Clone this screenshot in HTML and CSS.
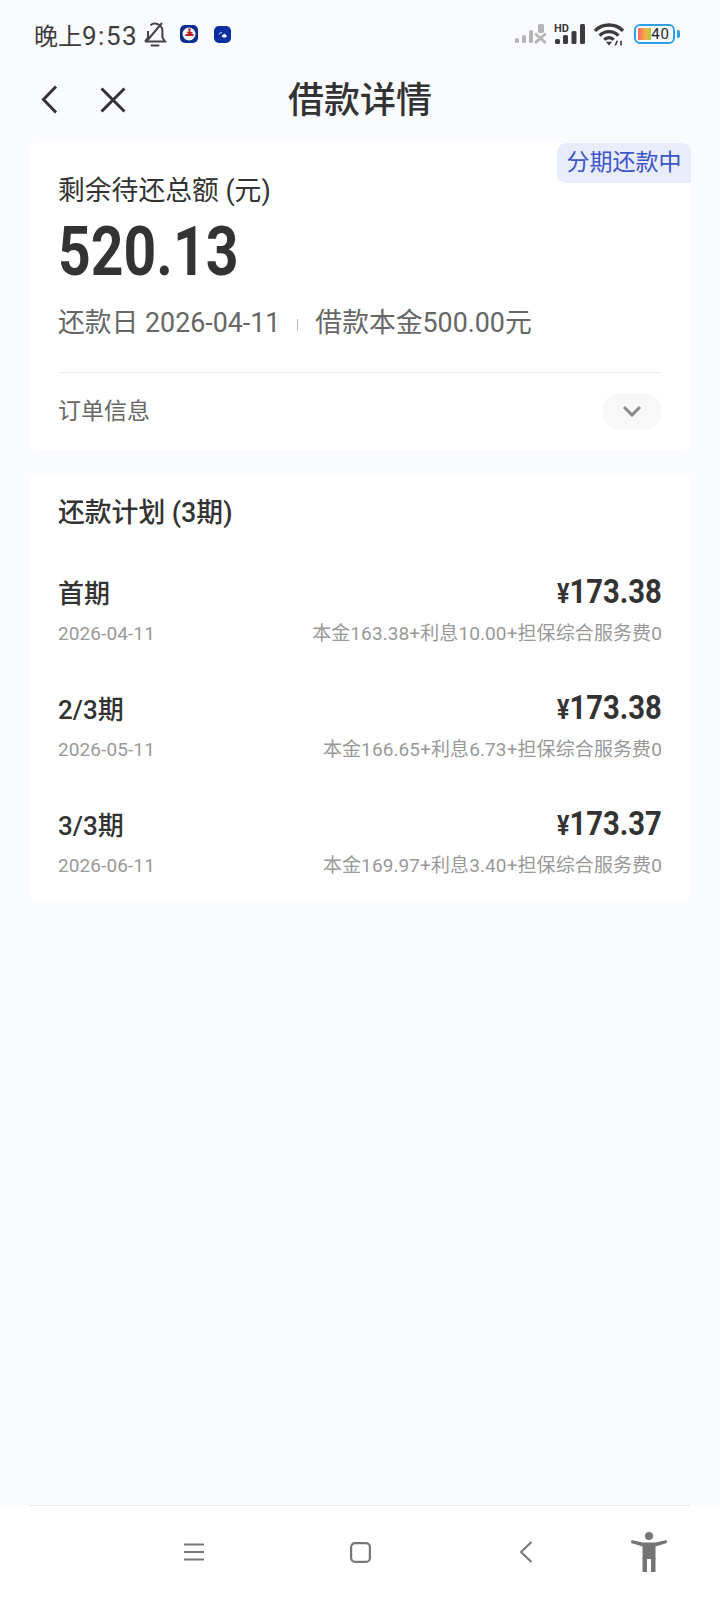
FILE: index.html
```html
<!DOCTYPE html>
<html lang="zh">
<head>
    <meta charset="UTF-8">
    <meta name="viewport" content="width=device-width, initial-scale=1.0">
    <title>借款详情</title>
    <link rel="stylesheet" href="styles.css">
</head>
<body>
    <div class="status-bar">
        <span class="status-time">晚上<span class="status-clock">9:53</span></span>
        <svg class="icon-bell" width="24" height="26" viewBox="0 0 24 26" fill="none" stroke="#444" stroke-width="2">
            <path d="M2 20.5h20l-2.6-4V10a7.4 7.4 0 0 0-12-5.8M5 10v6.500l-3 4"/>
            <path d="M3 21L19 2"/>
            <path d="M8.500 24.500h7" stroke-linecap="round"/>
        </svg>
        <svg class="icon-app-one" width="18" height="18" viewBox="0 0 18 18">
            <rect width="18" height="18" rx="5" fill="#0b2e8f"/>
            <circle cx="9" cy="9" r="6.500" fill="#f4f4f4"/>
            <path d="M8 3.500h3l-1 3 3 1-2 1.500h2.500v2h-8v-2h3l-2-2 2.500-.5z" fill="#c0191f"/>
        </svg>
        <svg class="icon-app-two" width="17" height="17" viewBox="0 0 17 17">
            <rect width="17" height="17" rx="5" fill="#0a2fa0"/>
            <path d="M5 8.500a2 2 0 0 1 3-1.500" fill="none" stroke="#e8eefc" stroke-width="1"/>
            <path d="M7.500 10l3-2.500 2.500 2.500-1 1.500H9z" fill="#f2f5ff"/>
        </svg>
        <div class="status-right">
            <svg width="31" height="20" viewBox="0 0 31 20" fill="#b4b4b4">
                <rect x="0" y="14" width="4" height="5" rx="1.500"/>
                <rect x="7" y="11" width="4" height="8" rx="1.500"/>
                <rect x="14" y="6" width="4" height="13" rx="1.500"/>
                <rect x="23" y="0" width="6" height="9" rx="1.500"/>
                <path d="M20 9.500l11 9.500M31 9.500l-11 9.500" stroke="#b4b4b4" stroke-width="2.800"/>
            </svg>
            <svg width="31" height="22" viewBox="0 0 31 22" fill="#3c3c3c">
                <text x="0" y="8.500" class="hd-text">HD</text>
                <rect x="1" y="16" width="5" height="5" rx="1.500"/>
                <rect x="9" y="12" width="5" height="9" rx="1.500"/>
                <rect x="17.500" y="8" width="5" height="13" rx="1.500"/>
                <rect x="26" y="1" width="5" height="20" rx="1.500"/>
            </svg>
            <svg width="32" height="24" viewBox="0 0 30 23" fill="none" stroke="#3c3c3c" stroke-width="3.200">
                <path d="M1.500 8.500a19 19 0 0 1 27 0"/>
                <path d="M6 13a12.500 12.500 0 0 1 18 0"/>
                <path d="M10.500 17a6 6 0 0 1 9 0"/>
                <path d="M12 19h6l-3 3.500z" fill="#3c3c3c" stroke="none"/>
                <path d="M23 18l-2 4.500M26.500 18v4.500" stroke-width="1.600"/>
            </svg>
            <div class="battery">
                <div class="battery-body">
                    <span class="battery-level"></span>
                    <span class="battery-num">40</span>
                </div>
                <span class="battery-tip"></span>
            </div>
        </div>
    </div>

    <div class="nav-bar">
        <div class="nav-left">
            <svg width="17" height="29" viewBox="0 0 17 29" fill="none" stroke="#333" stroke-width="3">
                <path d="M15 1.500L2.500 14.500 15 27.500"/>
            </svg>
            <svg width="26" height="26" viewBox="0 0 26 26" fill="none" stroke="#333" stroke-width="3">
                <path d="M1.500 1.500l23 23M24.500 1.500l-23 23"/>
            </svg>
        </div>
        <div class="nav-title">借款详情</div>
    </div>

    <div class="content">
        <div class="card summary">
            <div class="tag">分期还款中</div>
            <div class="summary-label">剩余待还总额 (元)</div>
            <div class="summary-amount"><span>520.13</span></div>
            <div class="summary-meta">
                <span>还款日 2026-04-11</span>
                <i class="meta-sep"></i>
                <span>借款本金500.00元</span>
            </div>
            <div class="order-row">
                <span class="order-text">订单信息</span>
                <div class="order-toggle">
                    <svg width="20" height="12" viewBox="0 0 20 12" fill="none" stroke="#888" stroke-width="3">
                        <path d="M2 2l8 8 8-8"/>
                    </svg>
                </div>
            </div>
        </div>

        <div class="card plan">
            <div class="plan-title">还款计划 (3期)</div>
            <div class="plan-row">
                <div class="plan-line">
                    <span class="plan-name">首期</span>
                    <span class="plan-amount"><span><small>¥</small>173.38</span></span>
                </div>
                <div class="plan-line plan-sub">
                    <span>2026-04-11</span>
                    <span>本金163.38+利息10.00+担保综合服务费0</span>
                </div>
            </div>
            <div class="plan-row">
                <div class="plan-line">
                    <span class="plan-name">2/3期</span>
                    <span class="plan-amount"><span><small>¥</small>173.38</span></span>
                </div>
                <div class="plan-line plan-sub">
                    <span>2026-05-11</span>
                    <span>本金166.65+利息6.73+担保综合服务费0</span>
                </div>
            </div>
            <div class="plan-row">
                <div class="plan-line">
                    <span class="plan-name">3/3期</span>
                    <span class="plan-amount"><span><small>¥</small>173.37</span></span>
                </div>
                <div class="plan-line plan-sub">
                    <span>2026-06-11</span>
                    <span>本金169.97+利息3.40+担保综合服务费0</span>
                </div>
            </div>
        </div>
    </div>

    <div class="bottom-nav">
        <div class="bottom-line"></div>
        <div class="bottom-icons">
            <div class="bottom-btn">
                <svg width="20" height="18" viewBox="0 0 20 18" stroke="#777" stroke-width="2">
                    <path d="M0 1.500h20M0 9h20M0 16.500h20"/>
                </svg>
            </div>
            <div class="bottom-btn">
                <svg width="21" height="21" viewBox="0 0 21 21" fill="none" stroke="#777" stroke-width="2.200">
                    <rect x="1.100" y="1.100" width="18.800" height="18.800" rx="4"/>
                </svg>
            </div>
            <div class="bottom-btn">
                <svg width="14" height="22" viewBox="0 0 14 22" fill="none" stroke="#777" stroke-width="2">
                    <path d="M12.500 1L2 11l10.500 10"/>
                </svg>
            </div>
            <div class="bottom-btn access">
                <svg width="36" height="40" viewBox="0 0 36 40" fill="#757575">
                    <circle cx="18" cy="4" r="4"/>
                    <path d="M.5 8l11 2.500h13l11-2.500.5 3-11.500 3.500V27h-13V14.500L0 11z"/>
                    <rect x="11.500" y="26" width="4.500" height="14"/>
                    <rect x="20" y="26" width="4.500" height="14"/>
                </svg>
            </div>
        </div>
    </div>
</body>
</html>
```

FILE: styles.css
```css
* {
    box-sizing: border-box;
}
body {
    margin: 0;
    width: 720px;
    height: 1600px;
    overflow: hidden;
    display: flex;
    flex-direction: column;
    background-color: #fafbff;
    color: #333;
    font-family: 'Roboto', 'Noto Sans CJK SC', sans-serif;
}
.status-bar {
    height: 68px;
    padding: 0 40px 0 34px;
    display: flex;
    align-items: center;
}
.status-time {
    font-size: 24px;
    color: #3c3c3c;
}
.status-clock {
    font-size: 26px;
    letter-spacing: 1.500px;
}
.icon-bell {
    margin-left: 5px;
}
.icon-app-one {
    margin-left: 13px;
}
.icon-app-two {
    margin-left: 16px;
}
.status-right {
    margin-left: auto;
    display: flex;
    align-items: center;
    gap: 8px;
}
.hd-text {
    font-size: 11px;
    font-weight: 700;
}
.battery {
    display: flex;
    align-items: center;
    gap: 2px;
    margin-left: 1px;
}
.battery-body {
    position: relative;
    width: 41px;
    height: 20px;
    border: 2.500px solid #2f9fe8;
    border-radius: 6px;
    display: flex;
    align-items: center;
    justify-content: flex-end;
    padding-right: 3px;
}
.battery-level {
    position: absolute;
    left: 2px;
    top: 2px;
    bottom: 2px;
    width: 13px;
    background: linear-gradient(to right, #f56a62, #f7b34a 60%, #9ccf3c);
}
.battery-num {
    position: relative;
    font-size: 15px;
    letter-spacing: 1px;
    color: #222;
}
.battery-tip {
    width: 3px;
    height: 8px;
    background-color: #2f9fe8;
    border-radius: 0 2px 2px 0;
}
.nav-bar {
    position: relative;
    height: 75px;
    padding: 0 0 18px 0;
    display: flex;
    align-items: center;
    justify-content: center;
}
.nav-left {
    position: absolute;
    left: 41px;
    top: 17px;
    display: flex;
    align-items: center;
    gap: 42px;
}
.nav-title {
    font-size: 36px;
    font-weight: 500;
    color: #333;
}
.content {
    flex: 1;
    padding: 0 29px;
    display: flex;
    flex-direction: column;
    gap: 23px;
}
.card {
    position: relative;
    background-color: #fff;
    border-radius: 9px;
    padding: 0 29px;
}
.summary {
    height: 307px;
}
.tag {
    position: absolute;
    right: 0;
    top: 0;
    width: 134px;
    height: 40px;
    background-color: #e9edfb;
    color: #3d55c8;
    font-size: 23px;
    line-height: 40px;
    text-align: center;
    border-radius: 9px 9px 0 9px;
}
.summary-label {
    padding-top: 30px;
    font-size: 26.800px;
    line-height: 36px;
}
.summary-amount {
    height: 70px;
    margin-top: 8px;
    font-size: 68px;
    font-weight: 700;
    line-height: 70px;
}
.summary-amount span {
    display: inline-block;
    transform: scaleX(0.84);
    transform-origin: left center;
}
.summary-meta {
    margin-top: 18px;
    display: flex;
    align-items: center;
    font-size: 26.800px;
    line-height: 36px;
    color: #666;
}
.meta-sep {
    width: 1px;
    height: 12px;
    margin: 4px 17px 0 17px;
    background-color: #bbb;
}
.order-row {
    margin-top: 31px;
    height: 77px;
    border-top: 1px solid #eee;
    display: flex;
    align-items: center;
    justify-content: space-between;
    font-size: 23px;
    color: #666;
}
.order-text {
    padding-bottom: 4px;
}
.order-toggle {
    width: 60px;
    height: 37px;
    border-radius: 18px;
    background-color: #f8f8f8;
    display: flex;
    align-items: center;
    justify-content: center;
}
.plan {
    height: 428px;
}
.plan-title {
    padding-top: 21px;
    margin-bottom: 41px;
    font-size: 26.800px;
    font-weight: 500;
    line-height: 38px;
    color: #333;
}
.plan-row {
    height: 116px;
}
.plan-line {
    display: flex;
    justify-content: space-between;
    align-items: center;
}
.plan-name {
    font-size: 26px;
    font-weight: 500;
    line-height: 38px;
}
.plan-amount {
    font-size: 34px;
    font-weight: 700;
    line-height: 36px;
    margin-bottom: 2px;
}
.plan-amount span {
    display: inline-block;
    transform: scaleX(0.86);
    transform-origin: right center;
}
.plan-amount small {
    font-size: 27px;
}
.plan-sub {
    margin-top: 6px;
    font-size: 19px;
    line-height: 28px;
    letter-spacing: 0.100px;
    color: #999;
}
.bottom-nav {
    height: 95px;
    background-color: #fff;
}
.bottom-line {
    height: 1px;
    margin: 0 30px 0 29px;
    background-color: #e6e6e6;
}
.bottom-icons {
    padding: 26px 0 0 111px;
    display: flex;
    align-items: center;
}
.bottom-btn {
    width: 166px;
    display: flex;
    justify-content: center;
}
.bottom-btn.access {
    width: 80px;
}
```
